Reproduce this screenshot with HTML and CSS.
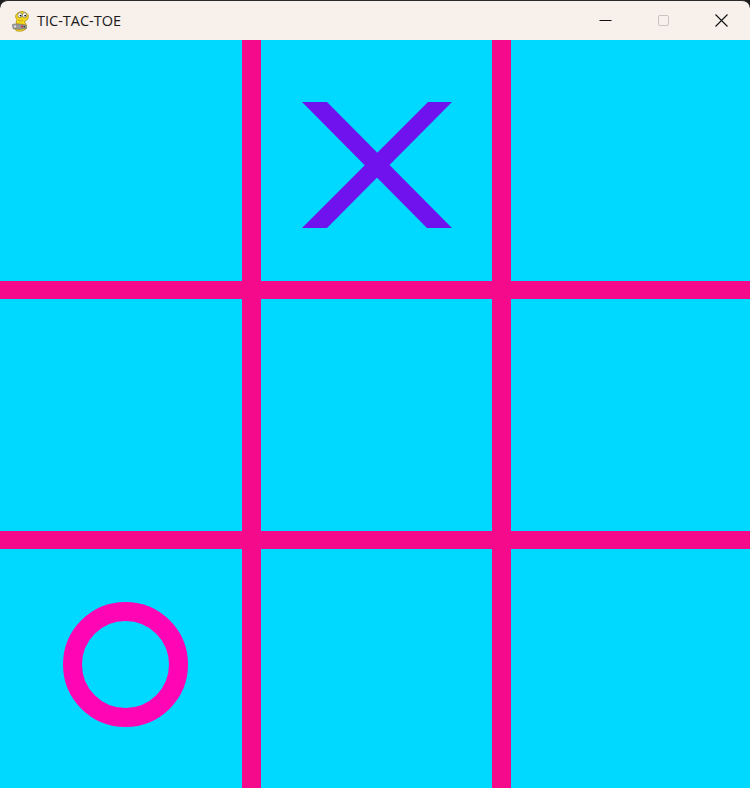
FILE: index.html
```html
<!DOCTYPE html>
<html>
<head>
<meta charset="utf-8">
<title>TIC-TAC-TOE</title>
<link rel="stylesheet" href="styles.css">
</head>
<body>
<div class="window">
  <div class="titlebar">
    <div class="app">
      <svg class="app-icon" width="20" height="22" viewBox="0 0 20 22">
        <path d="M6 21 C3 20 3 16 6 15 C5 13 5 11 6 9 C4 8 4 4 7 3 C9 1 13 1 15 3 C18 4 18 8 16 10 C15 11 14 11 13 12 C15 13 16 15 15 18 C14 21 10 21.5 6 21 Z" fill="#f4d61e" stroke="#a88a0a" stroke-width="0.7"/>
        <ellipse cx="9" cy="5.2" rx="2.2" ry="2.4" fill="#fff" stroke="#444" stroke-width="0.5"/>
        <ellipse cx="13.6" cy="5.2" rx="2.2" ry="2.4" fill="#fff" stroke="#444" stroke-width="0.5"/>
        <circle cx="9.6" cy="5.6" r="0.9" fill="#111"/>
        <circle cx="14.1" cy="5.6" r="0.9" fill="#111"/>
        <path d="M1.5 14.5 C4 13.5 9 13.8 15 15 L15.5 18.5 C10 19.5 5 19.5 2 18.5 Z" fill="#9a9a9a" stroke="#555" stroke-width="0.5"/>
        <rect x="3" y="15.5" width="2" height="2" fill="#e0e0e0"/>
        <circle cx="11" cy="16.5" r="1" fill="#c8202a"/>
        <circle cx="13.3" cy="16.8" r="0.8" fill="#2a2a2a"/>
        <path d="M7 10 C8 11 11 11 12 10" stroke="#a88a0a" stroke-width="0.6" fill="none"/>
      </svg>
      <span class="title">TIC-TAC-TOE</span>
    </div>
    <div class="controls">
      <div class="ctl">
        <svg width="13" height="13" viewBox="0 0 13 13"><path d="M0.5 6.5 H12.5" stroke="#111" stroke-width="1"/></svg>
      </div>
      <div class="ctl">
        <svg width="13" height="13" viewBox="0 0 13 13"><rect x="1.5" y="1.5" width="10" height="10" rx="1.5" fill="none" stroke="#c9c4c0" stroke-width="1"/></svg>
      </div>
      <div class="ctl">
        <svg width="13" height="13" viewBox="0 0 13 13"><path d="M0.5 0.5 L12.5 12.5 M12.5 0.5 L0.5 12.5" stroke="#111" stroke-width="1.1"/></svg>
      </div>
    </div>
  </div>
  <div class="board">
    <div class="cell"></div>
    <div class="cell cell-x">
      <svg width="150" height="126" viewBox="0 0 150 126">
        <polygon points="0,0 25,0 150,126 125,126" fill="#7012ee"/>
        <polygon points="126,0 150,0 25,126 0,126" fill="#7012ee"/>
      </svg>
    </div>
    <div class="cell"></div>
    <div class="cell"></div>
    <div class="cell"></div>
    <div class="cell"></div>
    <div class="cell cell-o">
      <svg width="125" height="125" viewBox="0 0 125 125">
        <circle cx="62.5" cy="62.5" r="53" fill="none" stroke="#ff05b4" stroke-width="19"/>
      </svg>
    </div>
    <div class="cell"></div>
    <div class="cell"></div>
  </div>
</div>
</body>
</html>
```

FILE: styles.css
```css
html, body {
  margin: 0;
  padding: 0;
  background: #1e1e1e;
}
body {
  width: 750px;
  height: 788px;
  overflow: hidden;
}
.window {
  width: 750px;
  height: 788px;
  display: flex;
  flex-direction: column;
  border-radius: 8px 8px 0 0;
  overflow: hidden;
}
.titlebar {
  height: 40px;
  flex: 0 0 40px;
  box-sizing: border-box;
  border-top: 1px solid #2a2a2a;
  background: #f7f0eb;
  display: flex;
  align-items: center;
  justify-content: space-between;
  border-radius: 8px 8px 0 0;
}
.app {
  display: flex;
  align-items: center;
  padding-left: 11px;
  gap: 6px;
}
.app-icon {
  display: block;
}
.title {
  font-family: "Open Sans", "Noto Sans", "DejaVu Sans", sans-serif;
  font-size: 14.5px;
  color: #1a1a1a;
  letter-spacing: 0;
}
.controls {
  display: flex;
  height: 100%;
}
.ctl {
  width: 58px;
  height: 100%;
  display: flex;
  align-items: center;
  justify-content: center;
}
.ctl svg {
  display: block;
}
.board {
  flex: 1;
  background: #f50a8c;
  display: grid;
  grid-template-columns: 242px 231px 1fr;
  grid-template-rows: 241px 232px 1fr;
  column-gap: 19px;
  row-gap: 18px;
}
.cell {
  background: #00d9ff;
}
.cell svg {
  display: block;
}
.cell-x {
  padding: 62px 0 0 41px;
}
.cell-o {
  padding: 53px 0 0 63px;
}
```
